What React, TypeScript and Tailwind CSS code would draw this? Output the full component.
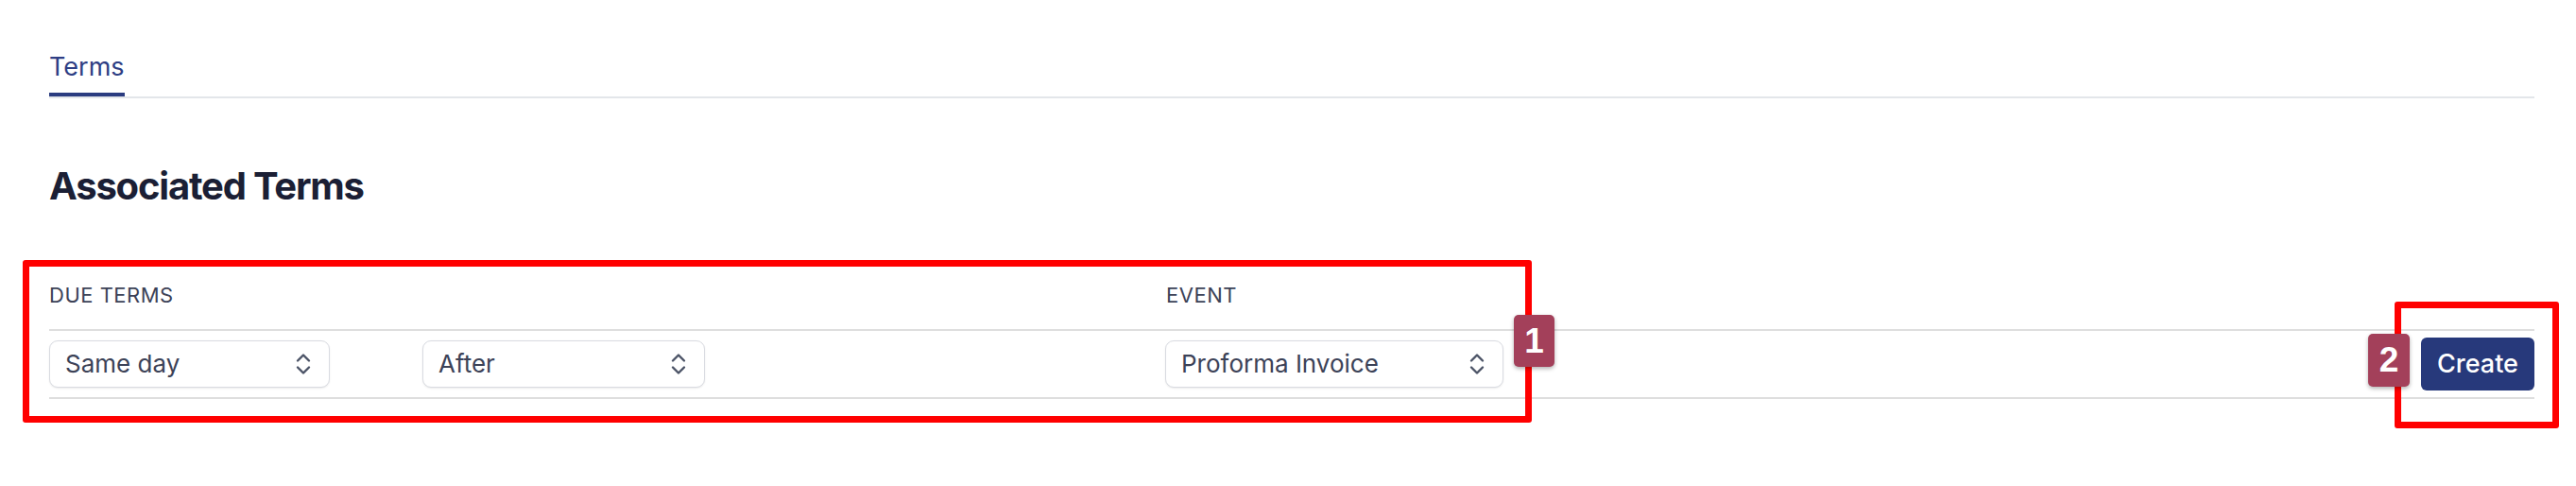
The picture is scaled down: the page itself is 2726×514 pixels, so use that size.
import React from 'react';

function UpDownIcon() {
  return (
    <svg width="18" height="26" viewBox="0 0 18 26" fill="none" className="shrink-0">
      <path d="M3 9.5L9 3.5l6 6" stroke="#4b5366" strokeWidth="2.4" strokeLinecap="round" strokeLinejoin="round" />
      <path d="M3 16.5l6 6 6-6" stroke="#4b5366" strokeWidth="2.4" strokeLinecap="round" strokeLinejoin="round" />
    </svg>
  );
}

function FakeSelect({ value, width }: { value: string; width: string }) {
  return (
    <button
      type="button"
      className={`flex h-[50px] ${width} items-center justify-between rounded-[9px] border-[1.5px] border-[#d9dbe1] bg-white pl-[16px] pr-[18px] text-[26px] leading-[32px] text-[#3c4257] shadow-[0_1px_2px_rgba(0,0,0,0.08)]`}
    >
      <span>{value}</span>
      <UpDownIcon />
    </button>
  );
}

export default function App() {
  return (
    <div className="relative h-[514px] w-[2726px] overflow-hidden bg-white font-['Inter',sans-serif]">
      <div className="pl-[52px] pr-[44px] pt-[53px]">
        {/* tabs */}
        <nav className="flex border-b-2 border-[#e3e6ea]">
          <div className="border-b-4 border-[#2b3c80] pb-[9px] text-[27px] leading-[36px] text-[#2e3e84]">
            Terms
          </div>
        </nav>

        <h2 className="mt-[69px] text-[40px] font-bold leading-[48px] tracking-[-1.2px] text-[#1b1f35]">
          Associated Terms
        </h2>

        {/* table */}
        <div className="mt-[55px]">
          <div className="flex border-b-2 border-[#dedede] py-[22px] text-[22px] uppercase leading-[28px] tracking-[0.5px] text-[#3c4257]">
            <div className="w-[1182px]">Due Terms</div>
            <div>Event</div>
          </div>
          <div className="flex h-[72px] items-center border-b-2 border-[#dedede]">
            <div className="w-[395px]">
              <FakeSelect value="Same day" width="w-[297px]" />
            </div>
            <div className="w-[786px]">
              <FakeSelect value="After" width="w-[299px]" />
            </div>
            <div>
              <FakeSelect value="Proforma Invoice" width="w-[358px]" />
            </div>
            <button
              type="button"
              className="ml-auto h-[56px] w-[120px] rounded-[6px] bg-[#27397b] text-[27px] font-medium text-white"
            >
              Create
            </button>
          </div>
        </div>
      </div>

      {/* annotation overlays */}
      <div className="absolute left-[24px] top-[275px] h-[172px] w-[1597px] rounded-[3px] border-[7px] border-[#ff0000]" />
      <div className="absolute left-[2534px] top-[319px] h-[134px] w-[174px] rounded-[3px] border-[7px] border-[#ff0000]" />
      <div className="absolute left-[1602px] top-[333px] flex h-[55px] w-[43px] items-center justify-center rounded-[5px] bg-[#a3405a] font-['Liberation_Sans',sans-serif] text-[37px] font-bold text-white shadow-[0_2px_4px_rgba(0,0,0,0.3)]">
        1
      </div>
      <div className="absolute left-[2506px] top-[353px] flex h-[56px] w-[44px] items-center justify-center rounded-[5px] bg-[#a3405a] font-['Liberation_Sans',sans-serif] text-[37px] font-bold text-white shadow-[0_2px_4px_rgba(0,0,0,0.3)]">
        2
      </div>
    </div>
  );
}
